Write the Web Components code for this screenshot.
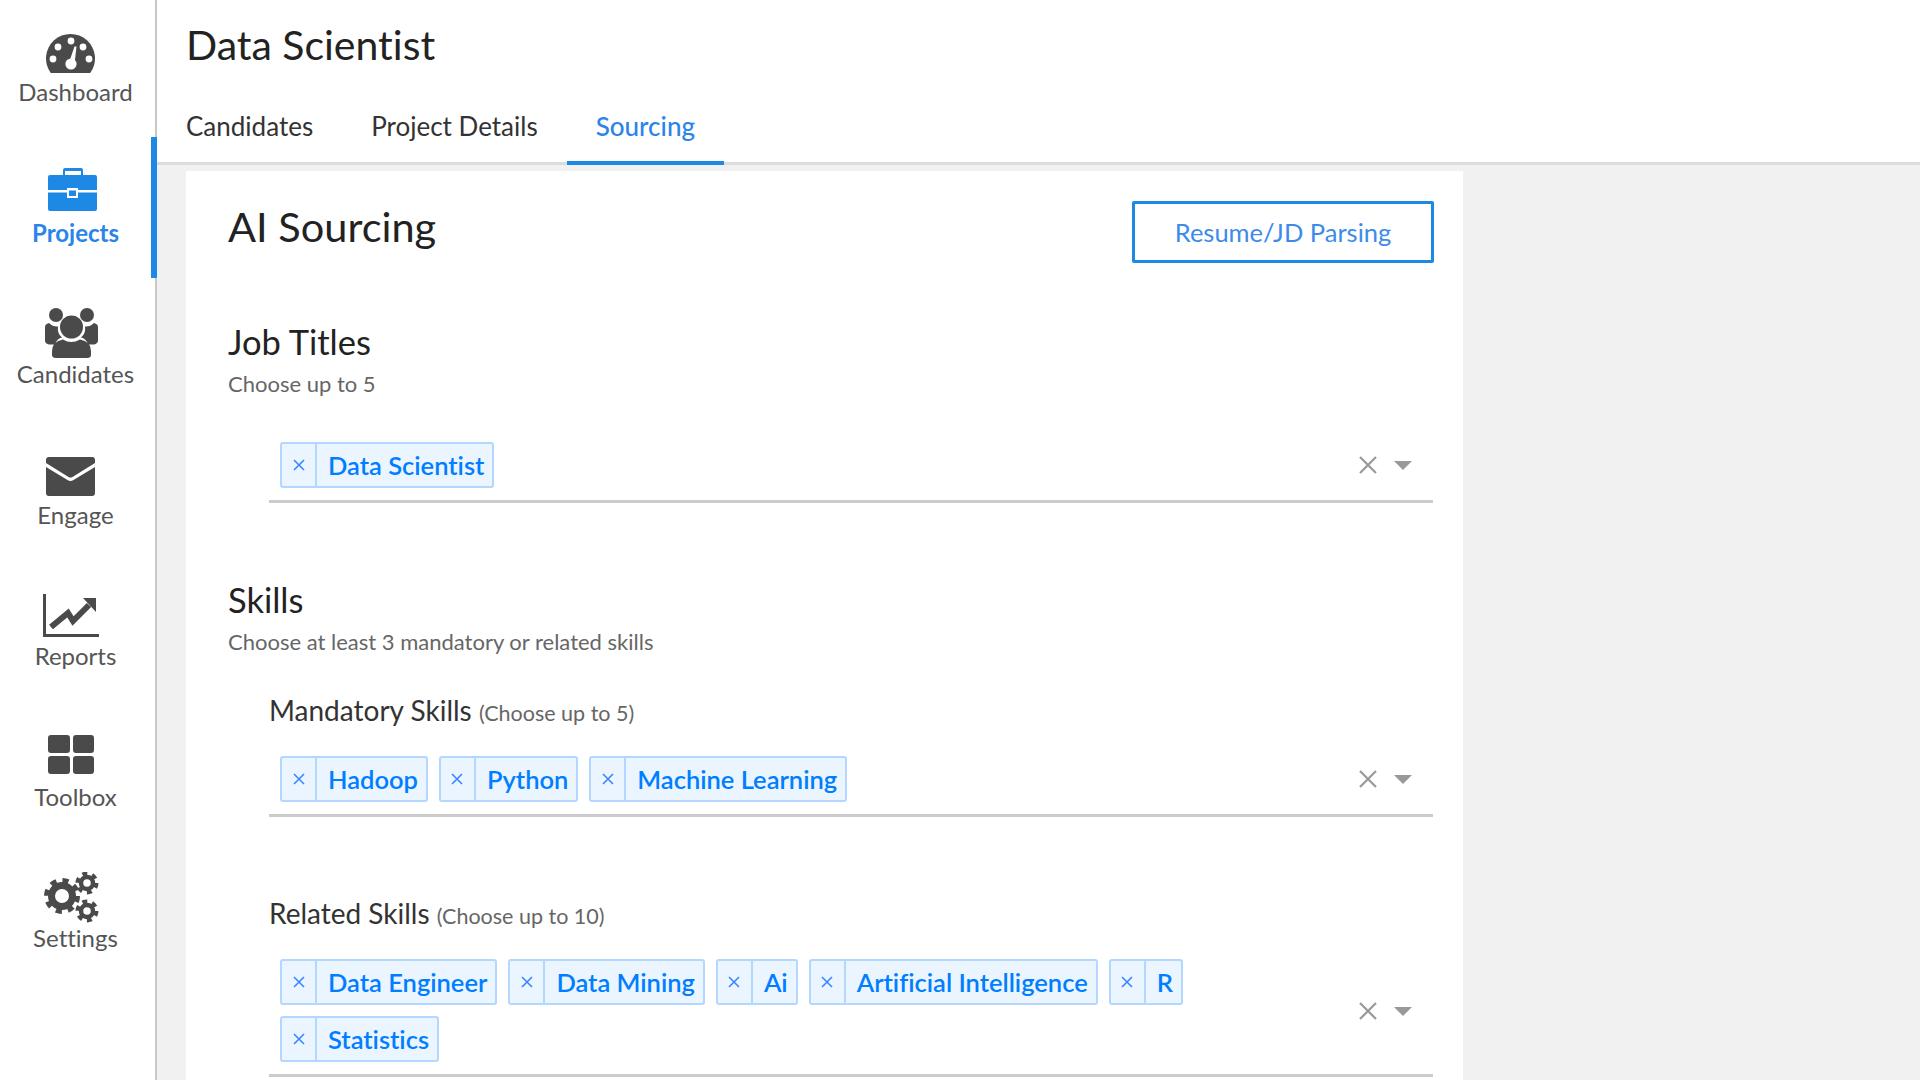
<!DOCTYPE html>
<html><head><meta charset="utf-8"><title>AI Sourcing</title>
<style>
html,body{margin:0;height:1080px;overflow:hidden;background:#f1f1f1;font-family:Lato,"Open Sans",sans-serif;font-variant-ligatures:none}
</style></head><body>
<app-shell>
  <side-nav slot="nav">
    <nav-item label="Dashboard"><svg viewBox="0 0 60 52" width="60" height="52"><path fill="#4a4a4a" d="M9.8 47A24.5 24.5 0 1 1 49.2 47Z"/><g fill="#fff"><circle cx="12" cy="33" r="3.4"/><circle cx="17" cy="21" r="3.4"/><circle cx="30" cy="15" r="3.4"/><circle cx="42" cy="21" r="3.4"/><circle cx="48" cy="33" r="3.4"/><circle cx="30" cy="38" r="5.6"/><path d="M33.5 20.5h2L33.5 38h-6z"/></g></svg></nav-item>
    <nav-item label="Projects" active><svg viewBox="0 0 60 52" width="60" height="52"><path fill="#1e88e5" fill-rule="evenodd" d="M24 1h16q2 0 2 2v5h-2V4H24v4h-2V3q0-2 2-2ZM9 8h45q2 0 2 2v13H37v-2H26v2H7V10q0-2 2-2ZM7 25.500h19V31h11v-5.500h19V42q0 2-2 2H9q-2 0-2-2ZM28 23.500h7V29h-7Z"/></svg></nav-item>
    <nav-item label="Candidates"><svg viewBox="0 0 60 52" width="60" height="52"><g fill="#4a4a4a"><circle cx="15" cy="7" r="7"/><circle cx="46" cy="7" r="7"/><path d="M8 15q4 4 9 3.500q-1 7 4 11q-5 1-7 7H8q-4-1-4-4V19q0-3 4-4ZM53 15q-4 4-9 3.500q1 7-4 11q5 1 7 7h6q4-1 4-4V19q0-3-4-4Z"/><circle cx="30.500" cy="19" r="11.500"/><path d="M22 31.500q8 5 17 0q11 2 11 12V47q0 3-4 3H15q-4 0-4-3v-3.500q0-10 11-12Z"/></g></svg></nav-item>
    <nav-item label="Engage"><svg viewBox="0 0 60 52" width="60" height="52"><g fill="#4a4a4a"><path d="M8 8h43q3 0 3 3v3L31.500 28q-2 1-4 0L5 14v-3q0-3 3-3Z"/><path d="M5 18 26.500 31q3 1.800 6 0L54 18v26q0 3-3 3H8q-3 0-3-3Z"/></g></svg></nav-item>
    <nav-item label="Reports"><svg viewBox="0 0 60 52" width="60" height="52"><path d="M3.500 4V45.500H58" fill="none" stroke="#4a4a4a" stroke-width="3"/><path d="M10 37 27 23 32 31 48 15" fill="none" stroke="#4a4a4a" stroke-width="6"/><path fill="#4a4a4a" d="M42 8H55V22Z"/></svg></nav-item>
    <nav-item label="Toolbox"><svg viewBox="0 0 60 52" width="60" height="52"><g fill="#4a4a4a"><rect x="7" y="4" width="22" height="18" rx="3"/><rect x="32" y="4" width="21" height="18" rx="3"/><rect x="7" y="25" width="22" height="18" rx="3"/><rect x="32" y="25" width="21" height="18" rx="3"/></g></svg></nav-item>
    <nav-item label="Settings"><svg viewBox="0 0 60 52" width="60" height="52"><g fill="none" stroke="#4a4a4a"><circle cx="21" cy="24" r="10.500" stroke-width="7"/><circle cx="21" cy="24" r="15.500" stroke-width="5" stroke-dasharray="6.080 6.090"/><circle cx="46" cy="11" r="6" stroke-width="4.500"/><circle cx="46" cy="11" r="9.500" stroke-width="4" stroke-dasharray="4.970 4.980"/><circle cx="46" cy="39" r="6" stroke-width="4.500"/><circle cx="46" cy="39" r="9.500" stroke-width="4" stroke-dasharray="4.970 4.980"/></g></svg></nav-item>
  </side-nav>
  <page-header slot="header" title="Data Scientist">
    <tab-item>Candidates</tab-item>
    <tab-item>Project Details</tab-item>
    <tab-item active>Sourcing</tab-item>
  </page-header>
  <sourcing-card>
    <card-title>AI Sourcing<outline-button slot="action">Resume/JD Parsing</outline-button></card-title>
    <field-group heading="Job Titles" hint="Choose up to 5" style="--top:58px">
      <tag-select style="margin-top:40px"><tag-chip>Data Scientist</tag-chip></tag-select>
    </field-group>
    <field-group heading="Skills" hint="Choose at least 3 mandatory or related skills" style="--top:76px">
      <skill-label note="(Choose up to 5)" style="--gap:32px">Mandatory Skills</skill-label>
      <tag-select><tag-chip>Hadoop</tag-chip><tag-chip>Python</tag-chip><tag-chip>Machine Learning</tag-chip></tag-select>
      <skill-label note="(Choose up to 10)" style="--gap:78px">Related Skills</skill-label>
      <tag-select><tag-chip>Data Engineer</tag-chip><tag-chip>Data Mining</tag-chip><tag-chip>Ai</tag-chip><tag-chip>Artificial Intelligence</tag-chip><tag-chip>R</tag-chip><tag-chip>Statistics</tag-chip></tag-select>
    </field-group>
  </sourcing-card>
</app-shell>
<script>
function def(name, html, init){
  customElements.define(name, class extends HTMLElement{
    constructor(){super();const r=this.attachShadow({mode:'open'});r.innerHTML=html;}
    connectedCallback(){ if(init) init(this,this.shadowRoot); }
  });
}
def('app-shell',`<style>:host{display:flex;height:1080px;overflow:hidden}
.main{flex:1;min-width:0;display:flex;flex-direction:column}
.body{padding:6px 0 0 29px;width:1277px}</style>
<slot name="nav"></slot><div class="main"><slot name="header"></slot><div class="body"><slot></slot></div></div>`);
def('side-nav',`<style>:host{display:block;flex:none;width:155px;height:1080px;background:#fff;border-right:2px solid #c8c8c8}
.list{margin-top:-4px;display:flex;flex-direction:column}</style><div class="list"><slot></slot></div>`);
def('nav-item',`<style>:host{display:flex;flex-direction:column;align-items:center;box-sizing:border-box;width:157px;height:141px;padding:30px 0 0;border-right:6px solid transparent;color:#555;font-size:24px}
:host([active]){border-right-color:#1e88e5;color:#2b84e9;font-weight:700}
.ic{display:block;height:52px;margin-right:9px}
::slotted(svg){display:block}
.t{line-height:30px;margin-top:-1px}</style><div class="ic"><slot></slot></div><div class="t"></div>`,(h,r)=>{r.querySelector('.t').textContent=h.getAttribute('label')});
def('page-header',`<style>:host{display:block;background:#fff;border-bottom:3px solid #dcdcdc;height:162px;box-sizing:content-box}
h1{margin:0;padding:20px 0 0 29px;font-weight:400;font-size:41px;line-height:50px;color:#222}
.tabs{display:flex;margin-top:18px;height:74px}</style><h1></h1><div class="tabs"><slot></slot></div>`,(h,r)=>{r.querySelector('h1').textContent=h.getAttribute('title')});
def('tab-item',`<style>:host{display:block;box-sizing:border-box;height:77px;padding:0 29px;line-height:76px;font-size:26px;color:#333;margin-bottom:-3px}
:host([active]){color:#2b84e9;border-bottom:4px solid #1e88e5;font-weight:500}</style><slot></slot>`);
def('sourcing-card',`<style>:host{display:block;background:#fff;box-sizing:border-box;width:1277px;height:1000px;padding:30px 29px 0 42px}</style><slot></slot>`);
def('card-title',`<style>:host{display:flex;justify-content:space-between;align-items:flex-start;font-size:41.500px;line-height:50px;color:#222}
span{display:block}</style><span><slot></slot></span><slot name="action"></slot>`);
def('outline-button',`<style>:host{display:block;box-sizing:border-box;width:302px;height:62px;border:3px solid #1e88e5;border-radius:2px;text-align:center;font-size:25.500px;line-height:56px;color:#3d8be8}</style><slot></slot>`);
def('field-group',`<style>:host{display:block;margin-top:var(--top,40px)}
h2{margin:0;font-weight:400;font-size:34.500px;line-height:42px;color:#222}
p{margin:0;font-size:22px;line-height:36px;color:#666;margin-top:3px}
.kids{margin-left:41px}</style><h2></h2><p></p><div class="kids"><slot></slot></div>`,(h,r)=>{r.querySelector('h2').textContent=h.getAttribute('heading');r.querySelector('p').textContent=h.getAttribute('hint')});
def('skill-label',`<style>:host{display:block;margin-top:var(--gap,28px);font-size:28px;line-height:36px;color:#333;margin-bottom:25px}
small{font-size:21.500px;color:#666}</style><slot></slot> <small></small>`,(h,r)=>{r.querySelector('small').textContent=h.getAttribute('note')});
def('tag-select',`<style>:host{display:flex;box-sizing:border-box;width:1164px;align-items:center;border-bottom:3px solid #ccc;padding:0 0 12px 11px}
.v{flex:1;min-width:0;display:flex;flex-wrap:wrap;gap:11px}
.c{flex:none;width:86px;display:flex;align-items:center;position:relative;height:20px}
.x{position:absolute;left:12px;top:1px}.a{position:absolute;left:47px;top:6px}</style>
<div class="v"><slot></slot></div><div class="c"><svg class="x" width="18" height="18" viewBox="0 0 18 18"><path d="M1 1 17 17M17 1 1 17" stroke="#999" stroke-width="2.200"/></svg><svg class="a" width="18" height="9" viewBox="0 0 18 9"><path d="M0 0H18L9 9Z" fill="#999"/></svg></div>`);
def('tag-chip',`<style>:host{display:flex;box-sizing:border-box;height:46px;border:2px solid #b3d7ff;border-radius:3px;background:#ebf5ff;color:#007eff;font-size:25.500px;font-weight:600}
.r{width:33px;display:flex;align-items:center;justify-content:center;border-right:2px solid #b3d7ff}
.l{padding:0 8px 0 11px;line-height:42px}</style><div class="r"><svg width="12" height="12" viewBox="0 0 12 12"><path d="M1 1 11 11M11 1 1 11" stroke="#3a86ff" stroke-width="1.600"/></svg></div><div class="l"><slot></slot></div>`);
</script>
</body></html>
